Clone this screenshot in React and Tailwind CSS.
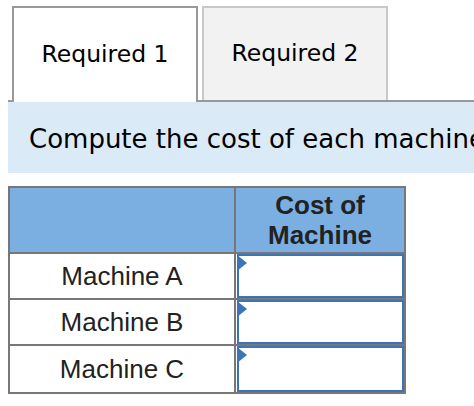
const rows = ["Machine A", "Machine B", "Machine C"];

function CostInput() {
  return (
    <div className="relative h-full ml-px border-2 border-[#3d74b9] bg-white">
      <svg className="absolute -left-[2px] -top-px" width="11" height="16" viewBox="0 0 11 16">
        <polygon points="0,0 10,8 0,16" fill="#3d74b9" />
      </svg>
    </div>
  );
}

export default function App() {
  return (
    <div className="w-[474px] h-[406px] overflow-hidden bg-white pl-2 pt-[6px]">
      {/* tabs */}
      <div
        className="flex items-end gap-1 pl-1 border-b-2 border-[#999] w-[600px]"
        style={{ fontFamily: '"DejaVu Sans", Verdana, sans-serif' }}
      >
        <div className="w-[186px] h-[96px] -mb-[2px] flex items-center justify-center border-2 border-b-0 border-[#999] bg-white text-[23.5px] text-black">
          Required 1
        </div>
        <div className="w-[186px] h-[94px] flex items-center justify-center border-2 border-b-0 border-[#c8c8c8] bg-[#f2f2f2] text-[23.5px] text-black">
          Required 2
        </div>
      </div>

      {/* instruction */}
      <div
        className="w-[600px] h-[71px] bg-[#dbeaf7] pl-[21px] flex items-center whitespace-nowrap text-[26px] text-black pt-[4px]"
        style={{ fontFamily: '"DejaVu Sans", Verdana, sans-serif' }}
      >
        Compute the cost of each machine.
      </div>

      {/* table */}
      <div
        className="mt-[13px] w-[398px] border-2 border-[#777]"
        style={{ fontFamily: '"Liberation Sans", Arial, sans-serif' }}
      >
        <div className="flex h-[66px] border-b-2 border-[#777] bg-[#7baee1]">
          <div className="w-[226px] border-r-2 border-[#777]" />
          <div className="flex-1 flex items-center justify-center text-center font-bold text-[26px] leading-[30px] text-[#222]">
            Cost of
            <br />
            Machine
          </div>
        </div>
        {rows.map((r, i) => (
          <div
            key={r}
            className={`flex h-[46px] ${i < rows.length - 1 ? "border-b-2 border-[#777]" : ""}`}
          >
            <div className="w-[226px] border-r-2 border-[#777] flex items-center justify-center text-[26px] text-[#222] pt-px">
              {r}
            </div>
            <div className="flex-1">
              <CostInput />
            </div>
          </div>
        ))}
      </div>
    </div>
  );
}
